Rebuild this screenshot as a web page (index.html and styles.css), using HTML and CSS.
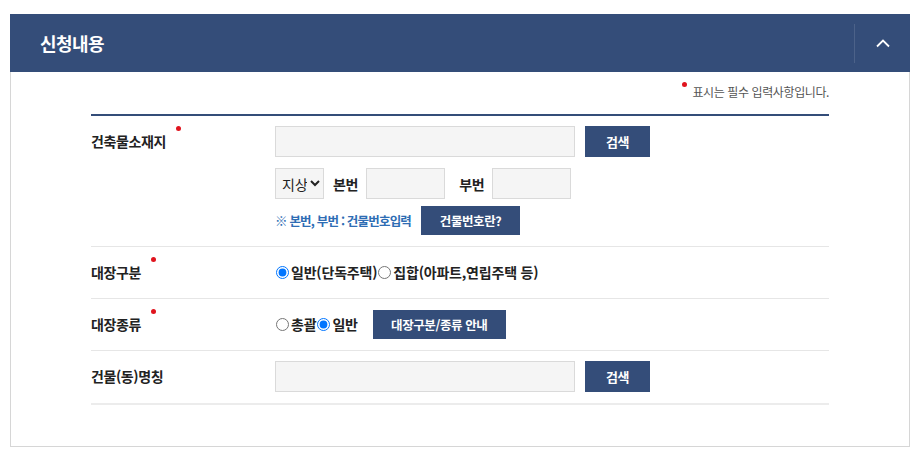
FILE: index.html
```html
<!DOCTYPE html>
<html lang="ko">
<head>
    <meta charset="UTF-8">
    <meta name="viewport" content="width=device-width, initial-scale=1.0">
    <title>신청내용</title>
    <link rel="stylesheet" href="styles.css">
</head>
<body>
    <!-- 신청내용 패널 -->
    <section class="panel">
        <div class="panel-head">
            <h2 class="panel-title">신청내용</h2>
            <button class="toggle" type="button" aria-label="접기">
                <svg width="16" height="10" viewBox="0 0 16 10"><path d="M2 8.5 L8 2.5 L14 8.5" fill="none" stroke="#fff" stroke-width="1.8"/></svg>
            </button>
        </div>

        <div class="panel-body">
            <p class="note"><span class="req"></span> 표시는 필수 입력사항입니다.</p>

            <div class="form">
                <!-- 건축물소재지 -->
                <div class="row">
                    <div class="label">건축물소재지<span class="req"></span></div>
                    <div class="field">
                        <div class="line">
                            <input type="text" class="input input-wide">
                            <button type="button" class="btn btn-search">검색</button>
                        </div>
                        <div class="line line-sub">
                            <select class="select">
                                <option>지상</option>
                                <option>지하</option>
                            </select>
                            <span class="sub-label">본번</span>
                            <input type="text" class="input input-num">
                            <span class="sub-label sub-label-gap">부번</span>
                            <input type="text" class="input input-num">
                        </div>
                        <div class="line line-help">
                            <span class="help">※ 본번, 부번 : 건물번호입력</span>
                            <button type="button" class="btn btn-small">건물번호란?</button>
                        </div>
                    </div>
                </div>

                <!-- 대장구분 -->
                <div class="row">
                    <div class="label">대장구분<span class="req"></span></div>
                    <div class="field line">
                        <label class="radio"><input type="radio" name="kind" checked>일반(단독주택)</label>
                        <label class="radio"><input type="radio" name="kind">집합(아파트,연립주택 등)</label>
                    </div>
                </div>

                <!-- 대장종류 -->
                <div class="row">
                    <div class="label">대장종류<span class="req"></span></div>
                    <div class="field line">
                        <label class="radio"><input type="radio" name="type">총괄</label>
                        <label class="radio"><input type="radio" name="type" checked>일반</label>
                        <button type="button" class="btn btn-small btn-guide">대장구분/종류 안내</button>
                    </div>
                </div>

                <!-- 건물(동)명칭 -->
                <div class="row">
                    <div class="label">건물(동)명칭</div>
                    <div class="field line">
                        <input type="text" class="input input-wide">
                        <button type="button" class="btn btn-search">검색</button>
                    </div>
                </div>
            </div>
        </div>
    </section>
</body>
</html>
```

FILE: styles.css
```css
:root {
    --navy: #344d79;
    --text: #222;
    --line: #e6e6e6;
    --red: #e0141e;
}

* {
    margin: 0;
    padding: 0;
    box-sizing: border-box;
}

body {
    padding: 14px 14px 0 10px;
    font-family: "Noto Sans CJK KR", "Noto Sans", sans-serif;
    color: var(--text);
    background: #fff;
}

/* 패널 */
.panel {
    width: 900px;
}

.panel-head {
    height: 58px;
    background: var(--navy);
    display: flex;
    align-items: center;
    justify-content: space-between;
    padding-left: 30px;
}

.panel-title {
    font-size: 18px;
    font-weight: 700;
    color: #fff;
    letter-spacing: -0.6px;
}

.toggle {
    width: 56px;
    height: 39px;
    border: none;
    border-left: 1px solid rgba(255,255,255,0.12);
    background: transparent;
    display: flex;
    align-items: center;
    justify-content: center;
    cursor: pointer;
}

.panel-body {
    border: 1px solid #d6d6d6;
    border-top: none;
    padding: 0 80px 41px;
}

.note {
    text-align: right;
    font-size: 12px;
    color: #555;
    letter-spacing: -0.4px;
    padding: 10px 0 12px;
    line-height: 20px;
}

.note .req {
    margin: 0 2px 0 0;
}

.req {
    display: inline-block;
    width: 5px;
    height: 5px;
    border-radius: 50%;
    background: var(--red);
    vertical-align: top;
    margin: 0 0 0 10px;
}

/* 폼 */
.form {
    border-top: 2px solid var(--navy);
    border-bottom: 2px solid #ececec;
}

.row {
    display: flex;
    padding: 10px 0 11px;
    border-top: 1px solid var(--line);
}

.row:first-child {
    border-top: none;
}

.label {
    width: 184px;
    flex-shrink: 0;
    font-size: 14px;
    font-weight: 700;
    line-height: 30px;
    letter-spacing: -0.4px;
    color: #222;
}

.field {
    flex: 1;
}

.line {
    display: flex;
    align-items: center;
    min-height: 29px;
}

.line-sub {
    margin-top: 11px;
}

.line-help {
    margin-top: 7px;
}

.input {
    height: 31px;
    background: #f5f5f5;
    border: 1px solid #dadada;
    font-size: 14px;
    padding: 0 8px;
}

.input-wide {
    width: 300px;
}

.input-num {
    width: 79px;
}

.select {
    width: 49px;
    height: 31px;
    background: #f5f5f5;
    border: 1px solid #dadada;
    font-family: inherit;
    font-size: 14px;
    color: #222;
    padding-left: 2px;
}

.sub-label {
    font-size: 14px;
    font-weight: 700;
    margin: 0 8px 0 9px;
    letter-spacing: -0.3px;
}

.sub-label-gap {
    margin-left: 14px;
}

.help {
    font-size: 12.5px;
    font-weight: 700;
    color: #2e6db4;
    letter-spacing: -0.8px;
}

.btn {
    background: var(--navy);
    color: #fff;
    border: none;
    font-family: inherit;
    font-weight: 700;
    letter-spacing: -0.4px;
    cursor: pointer;
}

.btn-search {
    width: 65px;
    height: 31px;
    margin-left: 10px;
    font-size: 13px;
}

.btn-small {
    width: 99px;
    height: 29px;
    margin-left: 10px;
    font-size: 12.5px;
}

.btn-guide {
    width: 133px;
    margin-left: 15px;
}

.radio {
    display: inline-flex;
    align-items: center;
    font-size: 14px;
    font-weight: 700;
    letter-spacing: -0.2px;
    color: #222;
}

.radio input {
    width: 13px;
    height: 13px;
    margin: 0 2px 0 1px;
}
```
